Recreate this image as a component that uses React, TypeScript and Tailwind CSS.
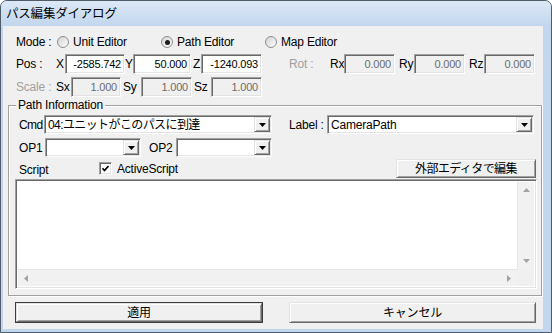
import type { ReactNode } from "react";

const sunken =
  "border border-t-[#a0a0a0] border-l-[#a0a0a0] border-b-white border-r-white shadow-[inset_1px_1px_0_#696969,inset_-1px_-1px_0_#e3e3e3]";
const raised =
  "border border-t-[#e3e3e3] border-l-[#e3e3e3] border-b-[#696969] border-r-[#696969] shadow-[inset_1px_1px_0_#fff,inset_-1px_-1px_0_#a0a0a0] bg-[#f0f0f0]";

function Field({ className, value, disabled }: { className: string; value: string; disabled?: boolean }) {
  return (
    <div
      className={`${className} ${sunken} h-[20px] flex items-center justify-end pr-[3px] text-[11px] tracking-[-0.2px] overflow-hidden whitespace-nowrap ${
        disabled ? "bg-[#f0f0f0] text-[#6d6d6d]" : "bg-white text-black"
      }`}
    >
      {value}
    </div>
  );
}

function Label({ className, children, muted }: { className: string; children: ReactNode; muted?: boolean }) {
  return (
    <div className={`${className} shrink-0 whitespace-nowrap ${muted ? "text-[#a0a0a0]" : "text-black"}`}>
      {children}
    </div>
  );
}

function Arrow({ dir, color }: { dir: "up" | "down" | "left" | "right"; color: string }) {
  const d = {
    down: "M0 0h7L3.5 4z",
    up: "M0 4h7L3.5 0z",
    left: "M4 0v7L0 3.5z",
    right: "M0 0v7L4 3.5z",
  }[dir];
  const vertical = dir === "up" || dir === "down";
  return (
    <svg width={vertical ? 7 : 4} height={vertical ? 4 : 7} viewBox={vertical ? "0 0 7 4" : "0 0 4 7"}>
      <path d={d} fill={color} />
    </svg>
  );
}

function Combo({ className, value }: { className: string; value?: string }) {
  return (
    <div className={`${className} ${sunken} h-[19px] flex bg-white p-[1px]`}>
      <div className="flex-1 pl-[2px] flex items-center whitespace-nowrap overflow-hidden">{value}</div>
      <div className={`${raised} w-[16px] flex items-center justify-center`}>
        <Arrow dir="down" color="#000" />
      </div>
    </div>
  );
}

function Radio({ label, checked }: { label: string; checked?: boolean }) {
  return (
    <div className="w-[104px] shrink-0 flex items-center">
      <div className="w-[12px] h-[12px] rounded-full border border-[#8e8f8f] bg-gradient-to-br from-[#d4d4d4] to-[#fbfbfb] flex items-center justify-center">
        {checked && <div className="w-[5px] h-[5px] rounded-full bg-[#1b1b1b]" />}
      </div>
      <span className="ml-[4px]">{label}</span>
    </div>
  );
}

export default function App() {
  return (
    <div className="w-[552px] h-[333px] flex flex-col border border-[#4f5b69] rounded-t-[7px] overflow-hidden bg-[#c2d6ed] font-['Liberation_Sans','Noto_Sans_CJK_JP',sans-serif] text-[12px] leading-[14px] tracking-[-0.2px]">
      <div className="h-[25px] shrink-0 flex items-center pl-[5px] bg-gradient-to-b from-[#dce8f6] to-[#c2d6ed] text-[12.5px] text-black">
        パス編集ダイアログ
      </div>

      <div className="flex flex-1">
        <div className="w-[2px] shrink-0" />
        <div className="w-[540px] h-[303px] shrink-0 bg-[#f0f0f0] flex flex-col">
          <div className="mt-[6px] h-[20px] pl-[13px] flex items-center">
            <Label className="w-[41px]">Mode :</Label>
            <Radio label="Unit Editor" />
            <Radio label="Path Editor" checked />
            <Radio label="Map Editor" />
          </div>

          <div className="mt-[2px] h-[20px] pl-[13px] flex items-center">
            <Label className="w-[40px]">Pos :</Label>
            <Label className="w-[9px]">X</Label>
            <Field className="w-[60px]" value="-2585.742" />
            <Label className="w-[8px]">Y</Label>
            <Field className="w-[58px]" value="50.000" />
            <Label className="w-[10px] pl-[2px]">Z</Label>
            <Field className="w-[61px]" value="-1240.093" />
            <Label className="w-[41px] ml-[27px]" muted>
              Rot :
            </Label>
            <Label className="w-[14px]">Rx</Label>
            <Field className="w-[51px]" value="0.000" disabled />
            <Label className="w-[19px] pl-[4px]">Ry</Label>
            <Field className="w-[51px]" value="0.000" disabled />
            <Label className="w-[19px] pl-[4px]">Rz</Label>
            <Field className="w-[51px]" value="0.000" disabled />
          </div>

          <div className="mt-[3px] h-[20px] pl-[13px] flex items-center">
            <Label className="w-[40px]" muted>
              Scale :
            </Label>
            <Label className="w-[15px]">Sx</Label>
            <Field className="w-[50px]" value="1.000" disabled />
            <Label className="w-[20px] pl-[2px]">Sy</Label>
            <Field className="w-[51px]" value="1.000" disabled />
            <Label className="w-[19px] pl-[2px]">Sz</Label>
            <Field className="w-[51px]" value="1.000" disabled />
          </div>

          <div className="relative mt-[8px] ml-[5px] w-[534px] h-[191px] border border-[#a0a0a0] shadow-[1px_1px_0_#fff,inset_1px_1px_0_#fff] flex flex-col">
            <span className="absolute top-[-8px] left-[7px] px-[2px] bg-[#f0f0f0]">Path Information</span>

            <div className="mt-[9px] pl-[10px] flex items-center">
              <Label className="w-[25px] tracking-[-0.6px]">Cmd</Label>
              <Combo className="w-[228px] tracking-[-0.6px]" value="04:ユニットがこのパスに到達" />
              <Label className="w-[38px] ml-[17px]">Label :</Label>
              <Combo className="w-[207px]" value="CameraPath" />
            </div>

            <div className="mt-[4px] pl-[10px] flex items-center">
              <Label className="w-[26px]">OP1</Label>
              <Combo className="w-[96px]" />
              <Label className="w-[27px] ml-[8px]">OP2</Label>
              <Combo className="w-[96px]" />
            </div>

            <div className="mt-[2px] h-[19px] pl-[10px] pr-[5px] flex items-center">
              <Label className="w-[80px] pt-[2px]">Script</Label>
              <div className={`${sunken} w-[13px] h-[13px] bg-white flex items-center justify-center`}>
                <svg width="7" height="7" viewBox="0 0 7 7">
                  <path d="M0.5 3.3L2.5 5.5L6.5 1" stroke="#000" strokeWidth="1.8" fill="none" />
                </svg>
              </div>
              <span className="ml-[5px]">ActiveScript</span>
              <div className={`${raised} ml-auto w-[140px] h-[19px] flex items-center justify-center tracking-[-0.6px]`}>
                外部エディタで編集
              </div>
            </div>

            <div className={`${sunken} mt-[1px] ml-[6px] w-[522px] h-[110px] bg-white flex flex-col p-[2px]`}>
              <div className="flex flex-1">
                <div className="flex-1 bg-white" />
                <div className="w-[17px] bg-[#f1f1f1] border-l border-[#e6e6e6] flex flex-col items-center justify-between py-[6px]">
                  <Arrow dir="up" color="#a3a3a3" />
                  <Arrow dir="down" color="#a3a3a3" />
                </div>
              </div>
              <div className="h-[17px] flex">
                <div className="flex-1 bg-[#f1f1f1] border-t border-[#e6e6e6] flex items-center justify-between px-[6px]">
                  <Arrow dir="left" color="#a3a3a3" />
                  <Arrow dir="right" color="#a3a3a3" />
                </div>
                <div className="w-[17px] bg-[#f0f0f0]" />
              </div>
            </div>
          </div>

          <div className="mt-[6px] h-[21px] pl-[12px] flex">
            <div className="w-[248px] border border-[#3c3c3c] flex">
              <div className={`${raised} flex-1 flex items-center justify-center`}>適用</div>
            </div>
            <div className={`${raised} ml-[26px] w-[247px] flex items-center justify-center`}>キャンセル</div>
          </div>
        </div>
        <div className="flex-1" />
      </div>
    </div>
  );
}
